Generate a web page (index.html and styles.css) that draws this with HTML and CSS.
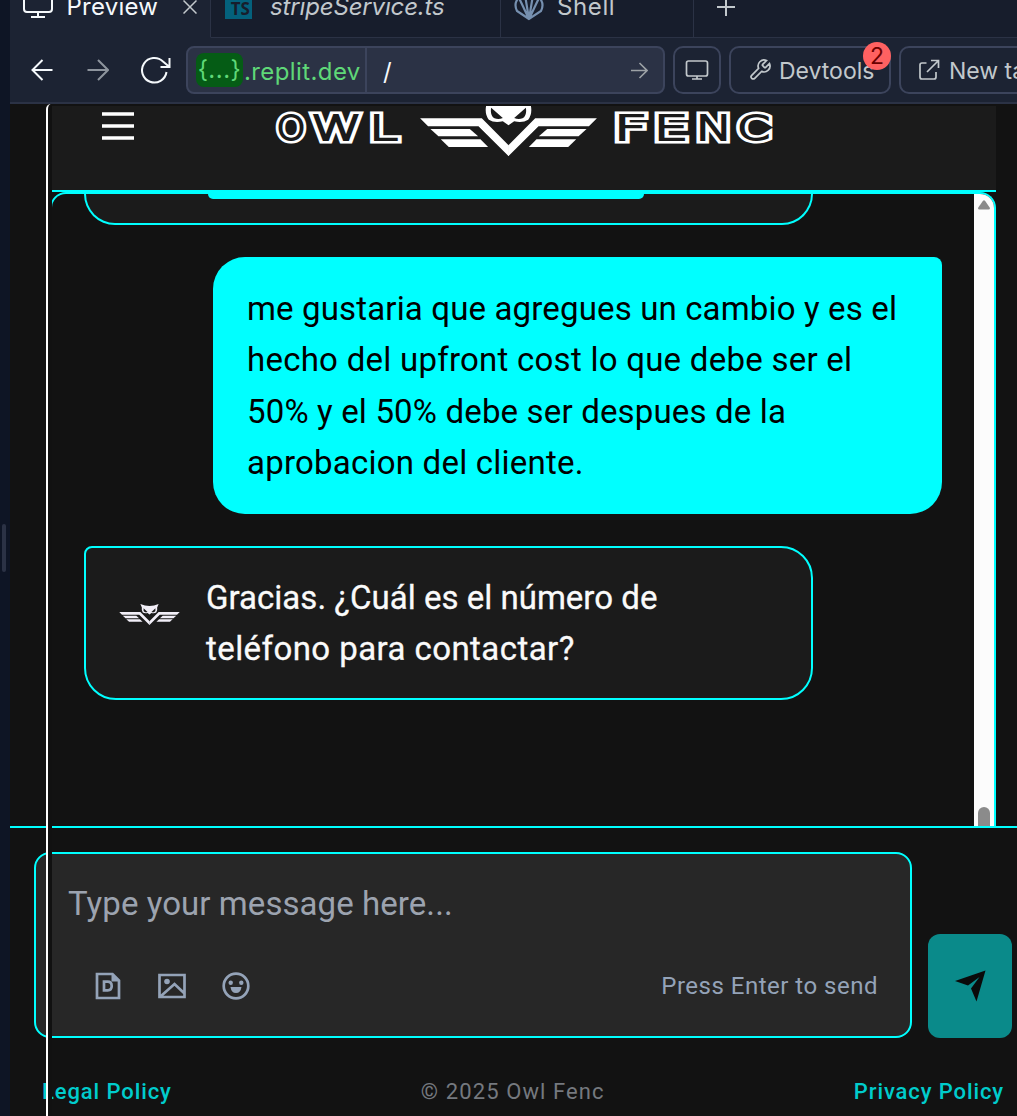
FILE: index.html
```html
<!DOCTYPE html>
<html lang="es">
<head>
<meta charset="utf-8">
<title>Owl Fenc</title>
<link rel="stylesheet" href="styles.css">
</head>
<body>
<svg class="defs" width="0" height="0" aria-hidden="true">
  <symbol id="owl" viewBox="479 0 530 184">
    <g id="wing">
      <path d="M479 70H664L745 151V183L744 183L654 94H503Z"/>
      <path d="M510 102H628L653 124H534Z"/>
      <path d="M541 133H660L683 156H565Z"/>
    </g>
    <use href="#wing" transform="matrix(-1 0 0 1 1488 0)"/>
    <path fill-rule="evenodd" d="M664 1L704 14Q744 22 784 14L824 1L811 31Q816 58 803 74Q787 85 761 79L744 91L727 79Q701 85 685 74Q672 58 677 31ZM692 38L727 69Q714 75 702 70Q688 62 692 38ZM796 38L761 69Q774 75 786 70Q800 62 796 38Z"/>
  </symbol>
</svg>
<div class="workspace">
  <aside class="gutter"><span class="grip"></span></aside>
  <div class="pane">
    <nav class="tabs">
      <div class="tab active">
        <svg class="i-preview" width="32" height="32" viewBox="0 0 32 32"><rect x="2" y="2" width="28" height="21" rx="3"/><path d="M16 23v5M9 28h14"/></svg>
        <span class="t-preview">Preview</span>
        <svg class="i-close" width="14" height="14" viewBox="0 0 14 14"><path d="M.5.5l13 13M13.5.5l-13 13"/></svg>
      </div>
      <div class="tab file"><span class="ts">TS</span><span class="t-file">stripeService.ts</span></div>
      <div class="tab shell">
        <svg class="i-shell" width="30" height="28" viewBox="0 0 30 28"><path d="M15 26L3 18Q0 12 3 7Q6 2 15 2Q24 2 27 7Q30 12 27 18ZM15 26L5 5M15 26L11 2M15 26L19 2M15 26L25 5"/></svg>
        <span class="t-shell">Shell</span>
      </div>
      <div class="tab add"><svg width="18" height="18" viewBox="0 0 18 18"><path d="M9 0v18M0 9h18"/></svg></div>
    </nav>
    <div class="toolbar">
      <div class="nav">
        <svg width="22" height="22" viewBox="0 0 22 22"><path d="M21.500 11H1.500M11.500 1l-10 10 10 10"/></svg>
        <svg class="dim" width="22" height="22" viewBox="0 0 22 22"><path d="M.5 11H21M11 1l10 10-10 10"/></svg>
        <svg class="reload" width="30" height="28" viewBox="0 0 30 28"><path d="M25.500 16A12.300 12.300 0 1 1 22 5.500L28.500 11M28.500 2v9h-9"/></svg>
      </div>
      <div class="url">
        <div class="host"><span class="chip">{...}</span><span class="domain">.replit.dev</span></div>
        <span class="route">/</span>
        <svg width="17" height="17" viewBox="0 0 17 17"><path d="M0 8.500H16M8.500 1l7.500 7.500-7.500 7.500"/></svg>
      </div>
      <div class="btn square"><svg width="24" height="22" viewBox="0 0 24 22"><rect x="1.500" y="2" width="21" height="15" rx="2"/><path d="M12 17v3M7 20h10"/></svg></div>
      <div class="btn devtools">
        <svg width="24" height="24" viewBox="0 0 24 24"><path d="M14.700 6.300a1 1 0 0 0 0 1.400l1.600 1.600a1 1 0 0 0 1.400 0l3.800-3.800a6 6 0 0 1-7.900 7.900l-6.900 6.900a2.100 2.100 0 0 1-3-3l6.900-6.900a6 6 0 0 1 7.900-7.900z"/></svg>
        <span class="t-dev">Devtools</span><span class="badge">2</span>
      </div>
      <div class="btn newtab">
        <svg width="22" height="22" viewBox="0 0 22 22"><path d="M8.500 4H4a2 2 0 0 0-2 2v12a2 2 0 0 0 2 2h12a2 2 0 0 0 2-2v-5M13 1.500h7.500V9M20.500 1.500L9 13"/></svg>
        <span class="t-new">New tab</span>
      </div>
    </div>
    <main class="app">
      <header class="brand">
        <svg class="menu" width="32" height="28" viewBox="0 0 32 28"><path d="M0 2h32M0 14h32M0 26h32"/></svg>
        <svg class="word owl-word" width="130" height="40" viewBox="0 0 130 40">
          <defs><text id="word-owl" y="34.300"><tspan x="2.500" textLength="29" lengthAdjust="spacingAndGlyphs">O</tspan><tspan x="37" textLength="51" lengthAdjust="spacingAndGlyphs">W</tspan><tspan x="95" textLength="29" lengthAdjust="spacingAndGlyphs">L</tspan></text></defs>
          <use class="outer" href="#word-owl"/><use class="inner" href="#word-owl"/>
        </svg>
        <svg class="emblem" width="177" height="61.400"><use href="#owl"/></svg>
        <svg class="word fenc-word" width="160" height="40" viewBox="0 0 160 40">
          <defs><text id="word-fenc" y="34.300"><tspan x="-.5" textLength="34" lengthAdjust="spacingAndGlyphs">F</tspan><tspan x="39.500" textLength="35" lengthAdjust="spacingAndGlyphs">E</tspan><tspan x="81.500" textLength="37" lengthAdjust="spacingAndGlyphs">N</tspan><tspan x="123" textLength="33" lengthAdjust="spacingAndGlyphs">C</tspan></text></defs>
          <use class="outer" href="#word-fenc"/><use class="inner" href="#word-fenc"/>
        </svg>
      </header>
      <section class="chat">
        <div class="messages">
          <div class="bubble previous"><span class="previous-action"></span></div>
          <div class="bubble user">
            <span class="l1">me gustaria que agregues un cambio y es el</span>
            <span class="l2">hecho del upfront cost lo que debe ser el</span>
            <span class="l3">50% y el 50% debe ser despues de la</span>
            <span class="l4">aprobacion del cliente.</span>
          </div>
          <div class="bubble bot">
            <svg class="avatar" width="61" height="21"><use href="#owl"/></svg>
            <div class="reply"><span class="l5">Gracias. ¿Cuál es el número de</span><span class="l6">teléfono para contactar?</span></div>
          </div>
        </div>
        <div class="scroll">
          <svg width="12" height="10" viewBox="0 0 12 10"><path d="M5 .7Q6-.3 7 .7L11.700 7.500Q12.500 9.500 10.500 9.500H1.500Q-.5 9.500.3 7.500Z"/></svg>
          <span class="thumb"></span>
        </div>
      </section>
      <section class="composer">
        <div class="input">
          <span class="placeholder">Type your message here...</span>
          <div class="tools">
            <svg width="28" height="28" viewBox="0 0 28 28"><path class="line" d="M3 2H18.500l6.500 6.500V26h-22Z"/><path d="M17.500 1.500l8 8h-8z"/><path class="line" d="M10 9.700h3.700q4 0 4 4.300t-4 4.300h-3.700Z"/></svg>
            <svg width="28" height="28" viewBox="0 0 28 28"><path class="line" d="M1.500 3h25v22h-25ZM3 24L16.500 12 26 21"/><circle cx="9" cy="9.500" r="2.800"/></svg>
            <svg width="28" height="28" viewBox="0 0 28 28"><circle class="line" cx="14" cy="14" r="12.300"/><circle cx="8.700" cy="10.700" r="2.200"/><circle cx="19.300" cy="10.700" r="2.200"/><path d="M8.500 15h11q-.8 6-5.500 6t-5.500-6z"/></svg>
            <span class="hint">Press Enter to send</span>
          </div>
        </div>
        <div class="send"><svg width="32" height="32" viewBox="0 0 32 32"><path d="M31.500 .5L22.500 31.500L17 18.500L25.500 7L14 15.500L1 11Z"/></svg></div>
      </section>
      <footer class="foot"><span class="legal">Legal Policy</span><span class="copy">© 2025 Owl Fenc</span><span class="privacy">Privacy Policy</span></footer>
      <div class="device-edge"></div>
    </main>
  </div>
</div>
</body>
</html>
```
FILE: styles.css
```css
* { box-sizing: border-box; }
body { margin: 0; background: #121212; overflow: hidden; font-family: Inter, sans-serif; }
svg { display: block; flex: none; fill: none; stroke: currentColor; stroke-width: 2; }
span { white-space: nowrap; }
.defs { position: absolute; }
.workspace { display: flex; width: 1017px; height: 1116px; overflow: hidden; }
.gutter { width: 10px; flex: none; background: #0e1525; padding: 524px 0 0 2px; }
.grip { display: block; width: 4px; height: 48px; border-radius: 2px; background: #2b3245; }
.pane { width: 1007px; flex: none; display: flex; flex-direction: column; }

/* Editor tabs */
.tabs { display: flex; height: 38px; flex: none; overflow: hidden; background: #171d2c; color: #c2c8cc; font-size: 24px; }
.tab { display: flex; align-items: center; flex: none; height: 62px; margin-top: -24px; border-bottom: 1px solid #2b3245; border-right: 1px solid #2b3245; }
.active { width: 201px; background: #1c2333; color: #f5f9fc; border-bottom-color: #1c2333; padding-left: 12px; }
.i-preview { margin-top: -3px; }
.t-preview { width: 92px; margin-left: 12.500px; letter-spacing: .25px; }
.i-close { margin-left: 24.500px; color: #c2c8cc; stroke-width: 1.5; }
.file { width: 290px; padding-left: 14px; font-style: italic; }
.ts { width: 27px; height: 28px; margin-top: -4px; padding: 8px 2px 0 0; background: #04617c; color: #171d2c; font: bold 17px/20px "Noto Sans", sans-serif; text-align: right; }
.t-file { margin-left: 18px; letter-spacing: -.15px; }
.shell { width: 193px; padding-left: 13px; }
.i-shell { color: #7690b0; stroke-width: 2.2; }
.t-shell { margin-left: 13px; letter-spacing: .6px; }
.add { flex: 1; padding-left: 23px; border-right: 0; }

/* Address bar */
.toolbar { display: flex; align-items: center; gap: 8px; height: 66px; flex: none; padding-left: 21px; background: #1c2333; border-bottom: 2px solid #2b3245; color: #c2c8cc; font-size: 23px; }
.nav { display: flex; align-items: center; width: 147px; flex: none; color: #f5f9fc; }
.dim { margin-left: 34px; color: #8d949d; }
.reload { margin-left: 32px; }
.url { width: 479px; height: 48px; flex: none; display: flex; align-items: center; border: 2px solid #3c445c; border-radius: 8px; background: #2b3245; color: #5fd878; padding-right: 15px; font-size: 24px; }
.host { display: flex; align-items: center; width: 179px; height: 44px; border-right: 2px solid #3c445c; padding-left: 8px; }
.chip { width: 47px; height: 34px; line-height: 33px; text-align: center; background: #055c15; border-radius: 8px; letter-spacing: .5px; }
.domain { margin-left: 1px; padding-top: 2px; letter-spacing: .4px; }
.route { margin-left: 16px; padding-top: 2px; flex: 1; color: #f5f9fc; }
.url svg { color: #9da2a6; stroke-width: 1.6; }
.btn { height: 48px; flex: none; border: 2px solid #3c445c; border-radius: 10px; display: flex; align-items: center; }
.square { width: 48px; justify-content: center; }
.square svg, .newtab svg, .devtools svg { stroke-width: 1.7; }
.devtools { width: 162px; padding-left: 17px; position: relative; }
.t-dev { margin-left: 7px; padding-top: 2px; }
.badge { position: absolute; left: 132px; top: -6px; width: 28px; height: 28px; border-radius: 50%; background: #ff6161; color: #6b0000; text-align: center; line-height: 29px; }
.newtab { width: 180px; padding-left: 17px; }
.t-new { margin-left: 9px; padding-top: 2px; }

/* Brand header */
.app { position: relative; height: 1012px; flex: none; display: flex; flex-direction: column; }
.brand { display: flex; align-items: flex-start; height: 86px; width: 944px; margin: 2px 0 0 42px; flex: none; background: #1b1b1b; border-bottom: 2px solid #0ff; overflow: hidden; color: #fff; }
.menu { margin: 6px 0 0 50px; stroke-width: 3.5; }
.word { font: 200 34.500px "DejaVu Sans", sans-serif; stroke-miterlimit: 3; }
.outer { fill: #fff; stroke: #fff; stroke-width: 7px; }
.inner { fill: #1b1b1b; stroke: #1b1b1b; stroke-width: 1.8px; }
.owl-word { margin-left: 140px; }
.emblem { margin: -11px 0 0 16px; fill: #fff; stroke: none; }
.fenc-word { margin-left: 17px; }

/* Conversation */
.chat { width: 946px; height: 634px; margin-left: 40px; flex: none; display: flex; overflow: hidden; border: 2px solid #0ff; border-bottom: 0; border-radius: 16px 16px 0 0; }
.messages { flex: 1; padding-left: 32px; color: #000; font: 400 33px/51.500px Roboto, sans-serif; }
.bubble { width: 729px; border-radius: 32px; }
.previous { height: 31px; border: 2px solid #0ff; border-top: 0; border-radius: 0 0 32px 32px; background: #1b1b1b; padding-left: 122px; }
.previous-action { display: block; width: 436px; height: 5px; background: #0ff; border-radius: 0 0 12px 12px; }
.user { margin: 32px 0 0 129px; height: 257px; padding: 25.500px 34px; border-top-right-radius: 8px; background: #0ff; }
.user span, .reply span { display: block; }
.bot { display: flex; margin-top: 32px; height: 154px; border: 2px solid #0ff; border-top-left-radius: 8px; background: #1b1b1b; color: #fafafa; padding: 23.500px 33px; }
.avatar { margin-top: 32.500px; fill: #f2eff8; stroke: none; }
.reply { margin-left: 26px; -webkit-text-stroke: .3px #fafafa; }
.l1 { letter-spacing: .15px; }
.l2 { letter-spacing: .25px; }
.l3 { letter-spacing: .16px; }
.l4 { letter-spacing: .22px; }
.l5 { letter-spacing: .02px; }
.l6 { letter-spacing: .43px; }
.scroll { width: 20px; background: #fcfcfc; display: flex; flex-direction: column; align-items: center; justify-content: space-between; padding-top: 6px; }
.scroll svg { fill: #8b8b8b; stroke: none; }
.thumb { width: 12px; height: 19px; border-radius: 6px 6px 0 0; background: #8b8b8b; }

/* Composer */
.composer { display: flex; align-items: flex-end; gap: 16px; height: 212px; flex: none; border-top: 2px solid #0ff; padding: 0 0 0 24px; background: #121212; }
.input { width: 878px; height: 186px; border: 2px solid #0ff; border-radius: 16px; background: #272727; color: #9ca3af; padding: 24px 32px; }
.placeholder { display: block; font: 400 33px/52px Roboto, sans-serif; letter-spacing: .07px; }
.tools { display: flex; align-items: center; gap: 36px; height: 28px; margin: 42px 0 0 26px; color: #94a3b8; }
.tools svg { fill: currentColor; stroke: none; }
.tools .line { fill: none; stroke: currentColor; stroke-width: 2.700; }
.hint { margin-left: auto; font: 400 24px/28px Roboto, sans-serif; letter-spacing: .5px; }
.send { width: 84px; height: 104px; border-radius: 12px; background: #0a8a8a; color: #0a0a0a; display: flex; align-items: center; justify-content: center; }
.send svg { fill: currentColor; stroke: none; }
.foot { display: flex; height: 78px; padding: 40px 13px 0 32px; font: 500 22px/28px Roboto, sans-serif; letter-spacing: .9px; color: #00cccc; justify-content: space-between; }
.copy { color: #75797f; font-weight: 400; letter-spacing: 1.1px; }

/* Rounded edge of the device frame, drawn over the app */
.device-edge { position: absolute; left: 36px; top: 0; width: 6px; height: 1012px; border-left: 2px solid #fff; border-top-left-radius: 5px; background: #111; }
```
